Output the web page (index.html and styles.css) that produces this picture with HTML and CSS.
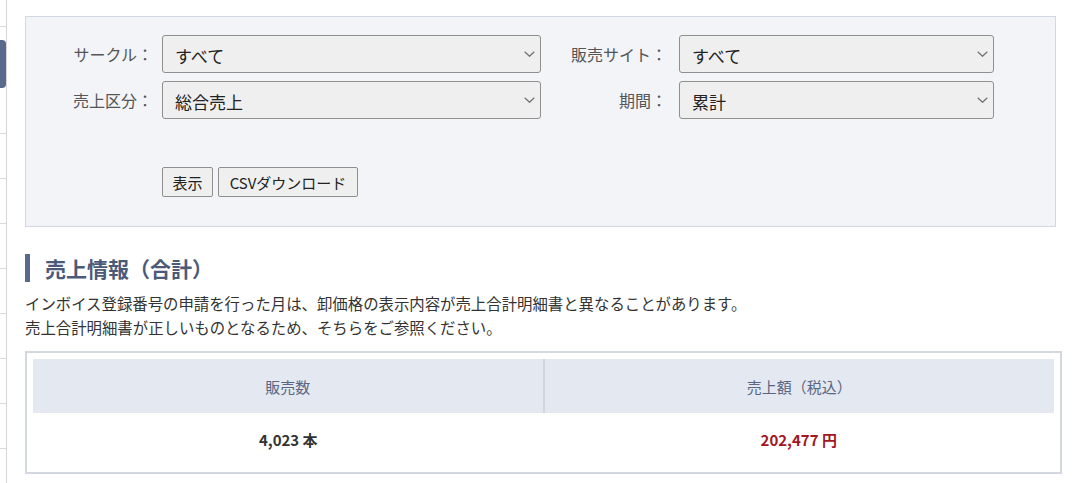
FILE: index.html
```html
<!DOCTYPE html>
<html lang="ja">
<head>
<meta charset="utf-8">
<link rel="stylesheet" href="styles.css">
</head>
<body>
<div class="layout">
  <nav class="sidebar">
    <div class="nav-item h26"></div>
    <div class="nav-item h107"><span class="active"></span></div>
    <div class="nav-item"></div>
    <div class="nav-item"></div>
    <div class="nav-item"></div>
    <div class="nav-item"></div>
    <div class="nav-item"></div>
    <div class="nav-item"></div>
    <div class="nav-item"></div>
  </nav>
  <main class="main">
    <form class="panel">
      <div class="form-row">
        <label class="lbl lbl1">サークル：</label>
        <div class="select sel1"><span>すべて</span><svg class="chev" viewBox="0 0 11 6" width="11" height="6"><path d="M0.7 0.7 L5.5 5.3 L10.3 0.7" fill="none" stroke="#707070" stroke-width="1.2"/></svg></div>
        <label class="lbl lbl2">販売サイト：</label>
        <div class="select sel2"><span>すべて</span><svg class="chev" viewBox="0 0 11 6" width="11" height="6"><path d="M0.7 0.7 L5.5 5.3 L10.3 0.7" fill="none" stroke="#707070" stroke-width="1.2"/></svg></div>
      </div>
      <div class="form-row">
        <label class="lbl lbl1">売上区分：</label>
        <div class="select sel1"><span>総合売上</span><svg class="chev" viewBox="0 0 11 6" width="11" height="6"><path d="M0.7 0.7 L5.5 5.3 L10.3 0.7" fill="none" stroke="#707070" stroke-width="1.2"/></svg></div>
        <label class="lbl lbl2">期間：</label>
        <div class="select sel2"><span>累計</span><svg class="chev" viewBox="0 0 11 6" width="11" height="6"><path d="M0.7 0.7 L5.5 5.3 L10.3 0.7" fill="none" stroke="#707070" stroke-width="1.2"/></svg></div>
      </div>
      <div class="btn-row">
        <button type="button" class="btn btn-show">表示</button>
        <button type="button" class="btn btn-csv">CSVダウンロード</button>
      </div>
    </form>

    <h2 class="heading">売上情報（合計）</h2>
    <p class="note">インボイス登録番号の申請を行った月は、卸価格の表示内容が売上合計明細書と異なることがあります。<br>売上合計明細書が正しいものとなるため、そちらをご参照ください。</p>

    <div class="summary">
      <div class="row head">
        <div class="cell">販売数</div>
        <div class="cell divided">売上額（税込）</div>
      </div>
      <div class="row body">
        <div class="cell qty">4,023 本</div>
        <div class="cell amount">202,477 円</div>
      </div>
    </div>
  </main>
</div>
</body>
</html>
```

FILE: styles.css
```css
* { box-sizing: border-box; }
html, body {
  margin: 0;
  padding: 0;
  background: #fff;
  font-family: "Noto Sans CJK JP", "Noto Sans", sans-serif;
  color: #333;
}
.layout {
  display: flex;
  align-items: flex-start;
}
.sidebar {
  width: 7px;
  flex: 0 0 7px;
  border-right: 1px solid #d6d6d6;
  min-height: 483px;
  display: flex;
  flex-direction: column;
}
.nav-item {
  height: 45px;
  border-bottom: 1px solid #d9d9d9;
}
.nav-item.h26 { height: 27px; }
.nav-item.h107 { height: 107px; padding-top: 13px; }
.active {
  display: block;
  width: 6px;
  height: 48px;
  background: #58698c;
  border-radius: 0 4px 4px 0;
}
.main {
  padding: 16px 0 0 18px;
  width: 1055px;
}
.panel {
  width: 1031px;
  height: 211px;
  background: #f2f4f8;
  border: 1px solid #d2d8e1;
  padding: 18px 0 0 0;
  margin: 0;
}
.form-row {
  display: flex;
  align-items: center;
  height: 38px;
  margin-bottom: 8px;
}
.lbl {
  font-size: 16px;
  color: #555;
  text-align: right;
  white-space: nowrap;
}
.lbl1 { width: 127px; margin-right: 9px; }
.lbl2 { width: 126px; margin-right: 12px; }
.select {
  height: 38px;
  background: #efefef;
  border: 1px solid #8f8f8f;
  border-radius: 3px;
  display: flex;
  align-items: center;
  justify-content: space-between;
  padding: 0 5px 0 12px;
  font-size: 17px;
  color: #222;
}
.select span { padding-top: 2px; }
.sel1 { width: 379px; }
.sel2 { width: 315px; }
.chev { display: block; margin-top: -1px; }
.btn-row {
  display: flex;
  gap: 5px;
  padding-left: 136px;
  margin-top: 48px;
}
.btn {
  height: 30px;
  background: #efefef;
  border: 1px solid #8f8f8f;
  border-radius: 2px;
  font-family: "Noto Sans CJK JP", "Noto Sans", sans-serif;
  font-size: 15px;
  color: #222;
  padding: 0;
  margin: 0;
}
.btn-show { width: 51px; }
.btn-csv { width: 140px; }
.heading {
  margin: 27px 0 0 0;
  height: 28px;
  border-left: 5px solid #58698c;
  padding-left: 15px;
  font-size: 21px;
  font-weight: bold;
  color: #4b5a78;
  line-height: 28px;
}
.note {
  margin: 9px 0 0 0;
  font-size: 15.4px;
  line-height: 24px;
  color: #333;
}
.summary {
  margin-top: 12px;
  width: 1037px;
  border: 2px solid #d3d8e0;
  padding: 6px;
  background: #fff;
}
.row {
  display: flex;
}
.cell {
  flex: 1 1 0;
  display: flex;
  align-items: center;
  justify-content: center;
}
.head .cell {
  height: 54px;
  background: #e3e8f1;
  font-size: 15px;
  color: #5a6682;
}
.head .cell.divided {
  border-left: 2px solid #d0d5de;
}
.body .cell {
  height: 53px;
  font-size: 15px;
  font-weight: bold;
}
.qty { color: #333; }
.amount { color: #a3161f; }
```
